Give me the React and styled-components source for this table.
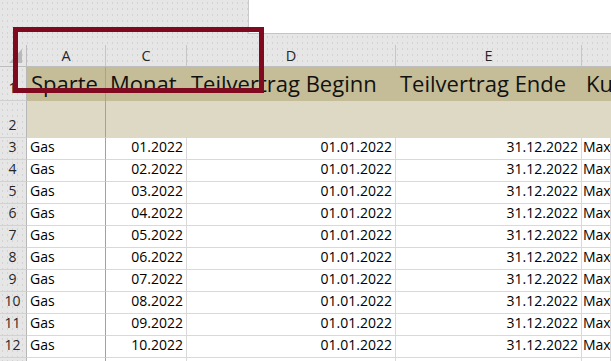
import styled, { createGlobalStyle, css } from "styled-components"

const COLS = "27px 79px 81px 209px 186px 1fr"

const GlobalStyle = createGlobalStyle`
    html, body {
        margin: 0;
        padding: 0;
        background: #ffffff;
        overflow: hidden;
    }
    * {
        box-sizing: border-box;
    }
`

const dotted = css`
    background-color: #e6e6e6;
    background-image: radial-gradient(circle, #d3d3d3 0.6px, transparent 0.9px);
    background-size: 5px 6px;
`

const rows = Array.from({ length: 10 }, (_, i) => ({
    nr: i + 3,
    sparte: "Gas",
    monat: String(i + 1).padStart(2, "0") + ".2022",
    beginn: "01.01.2022",
    ende: "31.12.2022",
    kunde: "Max",
}))

const App = () => {
    return (
        <Page>
            <GlobalStyle />
            <TopBand>
                <Ribbon />
                <Blank />
            </TopBand>

            <ColumnBar>
                <Corner>
                    <svg width="26" height="21" viewBox="0 0 26 21">
                        <polygon points="22,4 22,18 9,18" fill="#b9b9b9" />
                    </svg>
                </Corner>
                <ColLetter>A</ColLetter>
                <ColLetter>C</ColLetter>
                <ColLetter>D</ColLetter>
                <ColLetter>E</ColLetter>
                <ColLetter $last />
            </ColumnBar>

            <Row $h={34}>
                <RowHead $line="#cfcfcf">1</RowHead>
                <TitleCell $freeze>Sparte</TitleCell>
                <TitleCell>Monat</TitleCell>
                <TitleCell>Teilvertrag Beginn</TitleCell>
                <TitleCell>Teilvertrag Ende</TitleCell>
                <TitleCell>Ku</TitleCell>
            </Row>

            <Row $h={37}>
                <RowHead>2</RowHead>
                <SubCell $freeze />
                <SubCell />
                <SubCell />
                <SubCell />
                <SubCell />
            </Row>

            {rows.map(r => (
                <Row $h={22} key={r.nr}>
                    <RowHead>{r.nr}</RowHead>
                    <Cell $freeze>{r.sparte}</Cell>
                    <Cell $right>{r.monat}</Cell>
                    <Cell $right>{r.beginn}</Cell>
                    <Cell $right>{r.ende}</Cell>
                    <Cell $tight>{r.kunde}</Cell>
                </Row>
            ))}
            <Row $h={22}>
                <RowHead />
                <Cell $freeze />
                <Cell />
                <Cell />
                <Cell />
                <Cell />
            </Row>

            <Highlight />
        </Page>
    )
}

export default App

const Page = styled.div`
    position: relative;
    width: 611px;
    height: 361px;
    overflow: hidden;
    font-family: "Open Sans", "Noto Sans", sans-serif;
    color: #000;
`
const TopBand = styled.div`
    display: flex;
    height: 34px;
`
const Ribbon = styled.div`
    ${dotted};
    width: 249px;
    border-right: 1px solid #c9c9c9;
`
const Blank = styled.div`
    flex: 1;
    background: #ffffff;
    border-bottom: 1px solid #c4c4c4;
`
const ColumnBar = styled.div`
    ${dotted};
    display: grid;
    grid-template-columns: ${COLS};
    padding-top: 11px;
`
const Corner = styled.div`
    height: 22px;
    border-right: 1px solid #bdbdbd;
    border-bottom: 1px solid #bdbdbd;
    svg {
        display: block;
    }
`
const ColLetter = styled.div`
    height: 22px;
    display: flex;
    align-items: center;
    justify-content: center;
    font-size: 14.5px;
    color: #262626;
    border-right: ${props => props.$last ? "none" : "1px solid #c6c6c6"};
    border-bottom: 1px solid #bdbdbd;
`
const Row = styled.div`
    display: grid;
    grid-template-columns: ${COLS};
    height: ${props => props.$h}px;
`
const RowHead = styled.div`
    ${dotted};
    display: flex;
    align-items: flex-end;
    justify-content: center;
    padding-bottom: 3px;
    padding-right: 1px;
    font-size: 14px;
    line-height: 18px;
    color: #262626;
    border-right: 1px solid #b7b7b7;
    border-bottom: 1px solid ${props => props.$line || "#d2d2d2"};
`
const TitleCell = styled.div`
    background: #c4bd97;
    display: flex;
    align-items: flex-end;
    padding: 0 0 3px 4px;
    font-size: 22px;
    line-height: 30px;
    color: #111;
    white-space: nowrap;
    overflow: hidden;
    border-right: ${props => props.$freeze ? "1px solid #9ea59e" : "none"};
`
const SubCell = styled.div`
    background: #ddd9c4;
    border-right: ${props => props.$freeze ? "1px solid #9ea59e" : "none"};
    border-bottom: 1px solid #ddd9c4;
`
const Cell = styled.div`
    display: flex;
    align-items: flex-end;
    justify-content: ${props => props.$right ? "flex-end" : "flex-start"};
    padding: 0 3px 3px ${props => props.$tight ? "1px" : "3px"};
    font-size: 14px;
    line-height: 18px;
    white-space: nowrap;
    overflow: hidden;
    background: #ffffff;
    border-right: 1px solid ${props => props.$freeze ? "#9ea59e" : "#d9d9d9"};
    border-bottom: 1px solid #d9d9d9;
`
const Highlight = styled.div`
    position: absolute;
    left: 13px;
    top: 27px;
    width: 251px;
    height: 66px;
    border: 5px solid #7f0a1f;
    pointer-events: none;
`
